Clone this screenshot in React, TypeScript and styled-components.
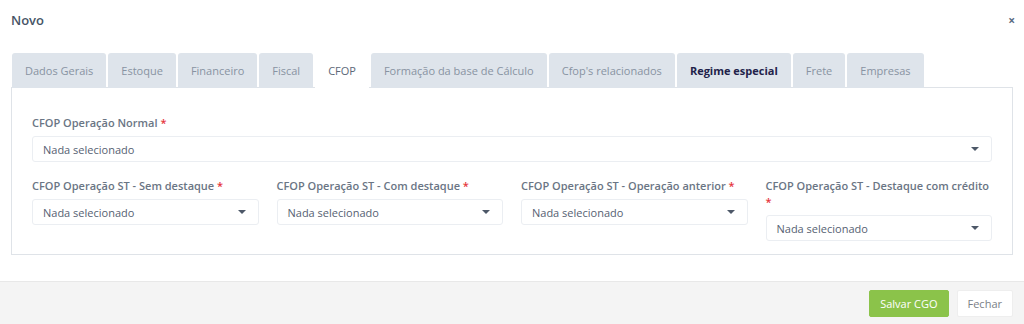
import React from 'react';
import styled, { createGlobalStyle } from 'styled-components';

const GlobalStyle = createGlobalStyle`
  html, body {
    margin: 0;
    padding: 0;
    background: #ffffff;
  }
  body {
    font-family: 'Open Sans', 'Noto Sans', sans-serif;
  }
`;

const Modal = styled.div`
  width: 1024px;
  height: 324px;
  display: flex;
  flex-direction: column;
  background: #ffffff;
  box-sizing: border-box;
`;

const Header = styled.div`
  height: 40px;
  display: flex;
  align-items: center;
  justify-content: space-between;
  padding: 0 9px 0 11px;
`;

const Title = styled.h4`
  margin: 0;
  font-size: 13px;
  font-weight: 600;
  color: #465466;
`;

const Close = styled.span`
  font-size: 12px;
  font-weight: 700;
  color: #5a6b82;
  cursor: pointer;
`;

const Body = styled.div`
  padding: 13px 11px 0;
`;

const TabList = styled.ul`
  display: flex;
  list-style: none;
  margin: 0 0 -1px 1px;
  padding: 0;
  gap: 2px;
  position: relative;
  z-index: 1;
`;

const Tab = styled.li<{ $active?: boolean; $strong?: boolean }>`
  height: 35px;
  display: flex;
  align-items: center;
  padding: 0 13px;
  font-size: 11px;
  border-radius: 3px 3px 0 0;
  background: ${(p) => (p.$active ? '#ffffff' : '#dee4eb')};
  color: ${(p) => (p.$strong ? '#22224a' : p.$active ? '#5d6878' : '#8893a2')};
  font-weight: ${(p) => (p.$strong ? 700 : 400)};
  white-space: nowrap;
`;

const Panel = styled.div`
  border: 1px solid #dfe3e8;
  padding: 27px 20px 13px;
  display: flex;
  flex-direction: column;
  gap: 16px;
`;

const Row = styled.div`
  display: grid;
  grid-template-columns: repeat(4, 1fr);
  gap: 18px;
`;

const Field = styled.div`
  display: flex;
  flex-direction: column;
  justify-content: flex-start;
`;

const Label = styled.label`
  font-size: 11px;
  font-weight: 600;
  color: #6a7584;
  line-height: 16px;
  margin-bottom: 5px;
`;

const Star = styled.span`
  color: #e5343b;
`;

const Select = styled.div`
  height: 26px;
  border: 1px solid #ebeef2;
  border-radius: 3px;
  box-sizing: border-box;
  display: flex;
  align-items: center;
  justify-content: space-between;
  padding: 0 12px 0 10px;
  font-size: 11px;
  color: #566172;
  background: #ffffff;
`;

const Caret = styled.span`
  width: 0;
  height: 0;
  border-left: 4px solid transparent;
  border-right: 4px solid transparent;
  border-top: 4px solid #4d5868;
`;

const Footer = styled.div`
  margin-top: auto;
  height: 43px;
  box-sizing: border-box;
  background: #f4f4f4;
  border-top: 1px solid #e8e8e8;
  display: flex;
  align-items: center;
  justify-content: flex-end;
  gap: 8px;
  padding: 0 11px;
`;

const Button = styled.button<{ $primary?: boolean }>`
  height: 27px;
  padding: 0 10px;
  font-family: inherit;
  font-size: 11px;
  border-radius: 2px;
  border: 1px solid ${(p) => (p.$primary ? '#8bc34a' : '#eeeeee')};
  background: ${(p) => (p.$primary ? '#8bc34a' : '#ffffff')};
  color: ${(p) => (p.$primary ? '#ffffff' : '#7a7f87')};
`;

const tabs = [
  'Dados Gerais',
  'Estoque',
  'Financeiro',
  'Fiscal',
  'CFOP',
  'Formação da base de Cálculo',
  "Cfop's relacionados",
  'Regime especial',
  'Frete',
  'Empresas',
];

const stFields = [
  'CFOP Operação ST - Sem destaque',
  'CFOP Operação ST - Com destaque',
  'CFOP Operação ST - Operação anterior',
  'CFOP Operação ST - Destaque com crédito',
];

const SelectBox = () => (
  <Select>
    Nada selecionado
    <Caret />
  </Select>
);

const App = () => {
  return (
    <Modal>
      <GlobalStyle />
      <Header>
        <Title>Novo</Title>
        <Close>×</Close>
      </Header>
      <Body>
        <TabList>
          {tabs.map((t) => (
            <Tab key={t} $active={t === 'CFOP'} $strong={t === 'Regime especial'}>
              {t}
            </Tab>
          ))}
        </TabList>
        <Panel>
          <Field>
            <Label>
              CFOP Operação Normal <Star>*</Star>
            </Label>
            <SelectBox />
          </Field>
          <Row>
            {stFields.map((f) => (
              <Field key={f}>
                <Label>
                  {f} <Star>*</Star>
                </Label>
                <SelectBox />
              </Field>
            ))}
          </Row>
        </Panel>
      </Body>
      <Footer>
        <Button $primary>Salvar CGO</Button>
        <Button>Fechar</Button>
      </Footer>
    </Modal>
  );
};

export default App;
